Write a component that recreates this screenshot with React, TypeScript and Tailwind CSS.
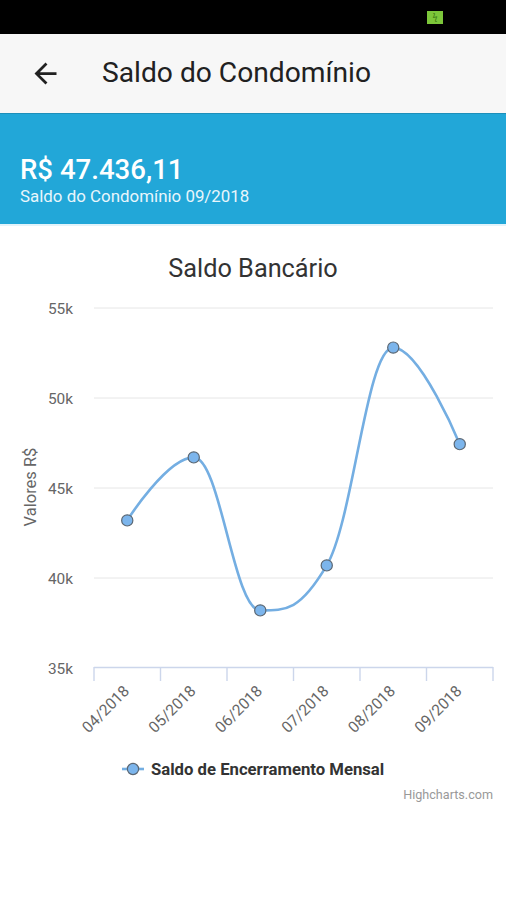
import React from "react";

const FONT = { fontFamily: "Roboto, 'Noto Sans', Arial, sans-serif" };

const data = [43200, 46700, 38200, 40700, 52800, 47436];
const cats = ["04/2018", "05/2018", "06/2018", "07/2018", "08/2018", "09/2018"];

const PLOT_L = 94;
const PLOT_R = 493;
const Y_BOTTOM = 668;
const yOf = (v: number) => Y_BOTTOM - ((v - 35000) / 5000) * 90;
const step = (PLOT_R - PLOT_L) / 6;
const xOf = (i: number) => PLOT_L + step * (i + 0.5);

function splinePath(pts: [number, number][]) {
  const s = 1.5;
  const d = s + 1;
  const ctrl = pts.map(() => ({ lx: 0, ly: 0, rx: 0, ry: 0 }));
  for (let i = 1; i < pts.length - 1; i++) {
    const [px, py] = pts[i];
    const [ax, ay] = pts[i - 1];
    const [nx, ny] = pts[i + 1];
    const lcx = (s * px + ax) / d;
    let lcy = (s * py + ay) / d;
    const rcx = (s * px + nx) / d;
    let rcy = (s * py + ny) / d;
    const corr = ((rcy - lcy) * (rcx - px)) / (rcx - lcx) + py - rcy;
    lcy += corr;
    rcy += corr;
    if (lcy > ay && lcy > py) {
      lcy = Math.max(ay, py);
      rcy = 2 * py - lcy;
    } else if (lcy < ay && lcy < py) {
      lcy = Math.min(ay, py);
      rcy = 2 * py - lcy;
    }
    if (rcy > ny && rcy > py) {
      rcy = Math.max(ny, py);
      lcy = 2 * py - rcy;
    } else if (rcy < ny && rcy < py) {
      rcy = Math.min(ny, py);
      lcy = 2 * py - rcy;
    }
    ctrl[i] = { lx: lcx, ly: lcy, rx: rcx, ry: rcy };
  }
  let p = `M ${pts[0][0]} ${pts[0][1]}`;
  for (let i = 1; i < pts.length; i++) {
    const a = i - 1 === 0 ? pts[0] : [ctrl[i - 1].rx, ctrl[i - 1].ry];
    const b = i === pts.length - 1 ? pts[i] : [ctrl[i].lx, ctrl[i].ly];
    p += ` C ${a[0]} ${a[1]} ${b[0]} ${b[1]} ${pts[i][0]} ${pts[i][1]}`;
  }
  return p;
}

function Chart() {
  const pts = data.map((v, i) => [xOf(i), yOf(v)] as [number, number]);
  const grid = [55000, 50000, 45000, 40000];
  const labels = [55000, 50000, 45000, 40000, 35000];
  return (
    <svg width={506} height={600} viewBox="0 226 506 600" className="block" style={FONT}>
      <text x={253} y={277} textAnchor="middle" fontSize={25.3} fill="#333333">
        Saldo Bancário
      </text>
      {grid.map((g) => (
        <line key={g} x1={PLOT_L} x2={PLOT_R} y1={yOf(g)} y2={yOf(g)} stroke="#e6e6e6" strokeWidth={1} />
      ))}
      {labels.map((l) => (
        <text key={l} x={73} y={yOf(l) + 6} textAnchor="end" fontSize={15.4} fill="#666666">
          {l / 1000}k
        </text>
      ))}
      <text
        x={35.5}
        y={487}
        textAnchor="middle"
        fontSize={16.5}
        fill="#666666"
        transform="rotate(-90 35.5 487)"
      >
        Valores R$
      </text>
      <line x1={PLOT_L} x2={PLOT_R} y1={667.5} y2={667.5} stroke="#ccd6eb" strokeWidth={1.4} />
      {Array.from({ length: 7 }).map((_, i) => (
        <line
          key={i}
          x1={PLOT_L + step * i}
          x2={PLOT_L + step * i}
          y1={667}
          y2={681}
          stroke="#ccd6eb"
          strokeWidth={1.4}
        />
      ))}
      {cats.map((c, i) => (
        <text
          key={c}
          x={xOf(i) + 3}
          y={692}
          textAnchor="end"
          fontSize={15.6}
          fill="#666666"
          transform={`rotate(-45 ${xOf(i) + 3} 692)`}
        >
          {c}
        </text>
      ))}
      <path d={splinePath(pts)} fill="none" stroke="#74aee2" strokeWidth={2.6} strokeLinejoin="round" strokeLinecap="round" />
      {pts.map(([x, y], i) => (
        <circle key={i} cx={x} cy={y} r={5.6} fill="#7cb5ec" stroke="#5b6773" strokeWidth={1.2} />
      ))}
      <line x1={122} x2={144} y1={769} y2={769} stroke="#74aee2" strokeWidth={2.6} />
      <circle cx={133} cy={769} r={5.6} fill="#7cb5ec" stroke="#5b6773" strokeWidth={1.2} />
      <text x={151} y={775} fontSize={16.7} fontWeight={700} fill="#333333">
        Saldo de Encerramento Mensal
      </text>
      <text x={493} y={799} textAnchor="end" fontSize={12.6} fill="#999999">
        Highcharts.com
      </text>
    </svg>
  );
}

export default function App() {
  return (
    <div className="w-[506px] min-h-[900px] bg-white overflow-hidden" style={FONT}>
      <div className="h-[34px] bg-black flex items-start justify-end pr-[63px] pt-[11px]">
        <div className="w-[16px] h-[13px] bg-[#7cc63a] flex items-center justify-center text-[9px] leading-none text-[#3d7a12]">
          ϟ
        </div>
      </div>
      <div className="h-[80px] bg-[#f7f7f7] flex items-center border-b border-[#1d8fba]">
        <div className="w-[33px] h-[33px] ml-[29px] text-[#212121]">
          <svg viewBox="0 0 24 24" width={33} height={33} fill="currentColor">
            <path d="M20 11H7.83l5.59-5.59L12 4l-8 8 8 8 1.41-1.41L7.83 13H20v-2z" />
          </svg>
        </div>
        <div className="ml-[40px] text-[28.2px] leading-none text-[#212121]">Saldo do Condomínio</div>
      </div>
      <div className="h-[112px] bg-[#22a7d8] pt-[40px] pl-[20px] border-b-2 border-[#e3f3fa]">
        <div className="text-[27.6px] leading-[32px] font-medium text-white">R$ 47.436,11</div>
        <div className="text-[16.9px] leading-[20px] text-[#e8f6fc]">Saldo do Condomínio 09/2018</div>
      </div>
      <Chart />
    </div>
  );
}
